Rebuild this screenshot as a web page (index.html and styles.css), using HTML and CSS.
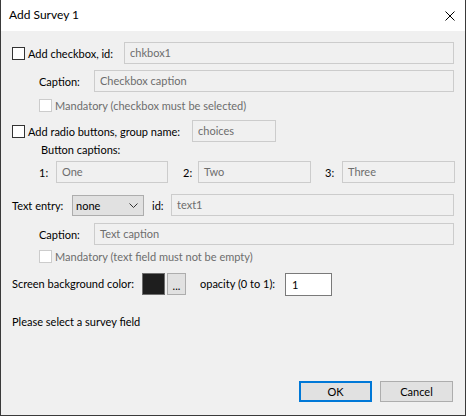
FILE: index.html
```html
<!DOCTYPE html>
<html>
<head>
<meta charset="utf-8">
<link rel="stylesheet" href="styles.css">
</head>
<body>
<div class="window">
  <div class="titlebar">
    <span class="title">Add Survey 1</span>
    <svg class="close" width="10" height="10" viewBox="0 0 10 10"><path d="M0.5 0.5 L9.5 9.5 M9.5 0.5 L0.5 9.5" stroke="#000" stroke-width="1" fill="none"/></svg>
  </div>
  <div class="content">
    <div class="row r1">
      <span class="cb"></span>
      <span class="lbl w-chk">Add checkbox, id:</span>
      <span class="tb grow">chkbox1</span>
    </div>
    <div class="row r2 ind">
      <span class="lbl w-cap">Caption:</span>
      <span class="tb grow">Checkbox caption</span>
    </div>
    <div class="row r3 ind">
      <span class="cb dis"></span>
      <span class="lbl distext">Mandatory (checkbox must be selected)</span>
    </div>
    <div class="row r4">
      <span class="cb"></span>
      <span class="lbl w-radio">Add radio buttons, group name:</span>
      <span class="tb w-group">choices</span>
    </div>
    <div class="row r5 ind2">
      <span class="lbl">Button captions:</span>
    </div>
    <div class="row r6 ind">
      <span class="lbl w-n1">1:</span>
      <span class="tb w-btn1">One</span>
      <span class="lbl w-n2">2:</span>
      <span class="tb w-btn">Two</span>
      <span class="lbl w-n3">3:</span>
      <span class="tb w-btn">Three</span>
    </div>
    <div class="row r7">
      <span class="lbl w-te">Text entry:</span>
      <span class="select">none<svg class="chev" width="9" height="5" viewBox="0 0 9 5"><path d="M0.5 0.5 L4.5 4.5 L8.5 0.5" stroke="#333" stroke-width="1" fill="none"/></svg></span>
      <span class="lbl w-id">id:</span>
      <span class="tb grow">text1</span>
    </div>
    <div class="row r8 ind">
      <span class="lbl w-cap">Caption:</span>
      <span class="tb grow">Text caption</span>
    </div>
    <div class="row r9 ind">
      <span class="cb dis"></span>
      <span class="lbl distext">Mandatory (text field must not be empty)</span>
    </div>
    <div class="row r10">
      <span class="lbl w-bg">Screen background color:</span>
      <span class="swatch"></span>
      <span class="dots">...</span>
      <span class="lbl w-op">opacity (0 to 1):</span>
      <span class="input">1</span>
    </div>
    <div class="row r11">
      <span class="lbl">Please select a survey field</span>
    </div>
    <div class="footer">
      <span class="btn ok">OK</span>
      <span class="btn">Cancel</span>
    </div>
  </div>
</div>
</body>
</html>
```
FILE: styles.css
```css
html, body {
  margin: 0;
  padding: 0;
  background: #f0f0f0;
}
.window {
  width: 464px;
  height: 415px;
  border-left: 1px solid #3a3a3a;
  border-right: 1px solid #3a3a3a;
  border-bottom: 1px solid #3a3a3a;
  background: #f0f0f0;
  font-family: Lato, "Liberation Sans", sans-serif;
  font-size: 11px;
  color: #000;
  display: flex;
  flex-direction: column;
}
.titlebar {
  height: 31px;
  background: #fff;
  display: flex;
  align-items: center;
  position: relative;
}
.title {
  padding-left: 8px;
  font-size: 12px;
  line-height: 16px;
  margin-top: -1px;
}
.close {
  position: absolute;
  left: 444px;
  top: 11px;
}
.content {
  padding: 0 11px;
  display: flex;
  flex-direction: column;
  flex: 1;
}
.row {
  display: flex;
  align-items: center;
  white-space: nowrap;
}
.ind { padding-left: 27px; }
.ind2 { padding-left: 29px; }
.r1 { margin-top: 11px; height: 22px; }
.r2 { margin-top: 6px; height: 22px; }
.r3 { margin-top: 5px; height: 17px; }
.r4 { margin-top: 6px; height: 22px; }
.r5 { margin-top: 0; height: 14px; }
.r6 { margin-top: 5px; height: 22px; }
.r7 { margin-top: 11px; height: 22px; }
.r8 { margin-top: 7px; height: 22px; }
.r9 { margin-top: 3px; height: 17px; }
.r10 { margin-top: 8px; height: 23px; align-items: flex-start; }
.r11 { margin-top: 18px; height: 15px; }
.lbl {
  line-height: 15px;
  flex: none;
}
.cb {
  width: 11px;
  height: 11px;
  border: 1px solid #333;
  background: #fff;
  margin-right: 3px;
  flex: none;
}
.cb.dis { border-color: #cccccc; }
.distext { color: #6d6d6d; }
.tb {
  box-sizing: border-box;
  height: 22px;
  border: 1px solid #cccccc;
  background: #f0f0f0;
  color: #6d6d6d;
  padding-left: 5px;
  line-height: 20px;
  flex: none;
}
.grow { flex: 1; }
.w-chk { width: 96px; }
.w-cap { width: 55px; }
.w-radio { width: 164px; }
.w-group { width: 84px; }
.w-n1 { width: 17px; }
.w-n2 { width: 15px; margin-left: 15px; }
.w-n3 { width: 17px; margin-left: 14px; }
.w-btn1 { width: 112px; }
.w-btn { width: 113px; }
.w-te { width: 60px; }
.w-id { width: 19px; margin-left: 8px; }
.select {
  box-sizing: border-box;
  width: 72px;
  height: 21px;
  border: 1px solid #adadad;
  background: #e1e1e1;
  padding-left: 3px;
  line-height: 21px;
  display: flex;
  align-items: center;
  justify-content: space-between;
  padding-right: 5px;
  flex: none;
}
.chev { margin-top: 1px; }
.w-bg { width: 130px; margin-top: 3px; }
.swatch {
  box-sizing: border-box;
  width: 23px;
  height: 22px;
  background: #1e1e1e;
  border: 1px solid #6e6e6e;
  flex: none;
}
.dots {
  box-sizing: border-box;
  width: 19px;
  height: 22px;
  margin-left: 2px;
  border: 1px solid #adadad;
  background: #e1e1e1;
  text-align: center;
  line-height: 24px;
  flex: none;
}
.w-op { width: 85px; margin-left: 14px; margin-top: 3px; }
.input {
  box-sizing: border-box;
  width: 47px;
  height: 23px;
  border: 1px solid #7a7a7a;
  background: #fff;
  padding-left: 6px;
  line-height: 21px;
  flex: none;
}
.footer {
  display: flex;
  justify-content: flex-end;
  gap: 8px;
  margin-top: 52px;
  margin-right: 1px;
}
.btn {
  box-sizing: border-box;
  width: 73px;
  height: 21px;
  border: 1px solid #adadad;
  background: #e1e1e1;
  text-align: center;
  line-height: 19px;
}
.btn.ok {
  border: 2px solid #0078d7;
  line-height: 17px;
}
```
